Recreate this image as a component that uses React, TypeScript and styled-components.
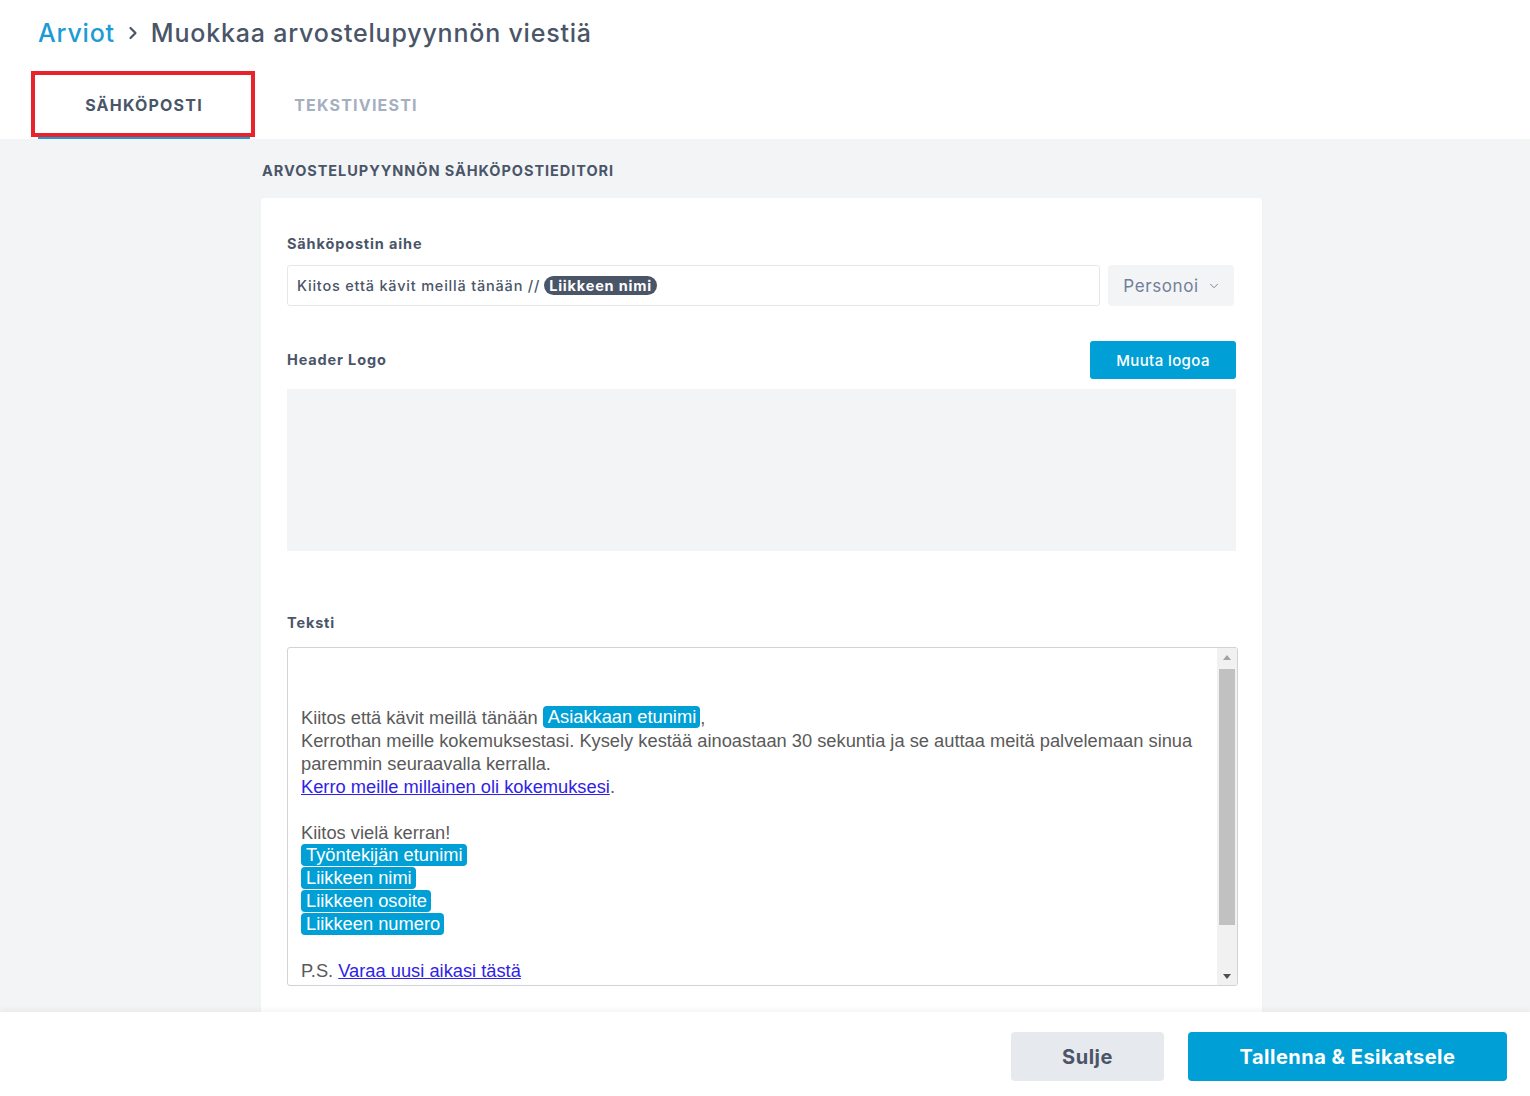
import React from "react";
import styled, { createGlobalStyle } from "styled-components";
import { ChevronRight, ChevronDown } from "lucide-react";

const GlobalStyle = createGlobalStyle`
  html, body, #root { margin: 0; padding: 0; height: 100%; }
  body { font-family: "Inter", "Noto Sans", sans-serif; background: #ffffff; }
  * { box-sizing: border-box; }
`;

const Page = styled.div`
  height: 100vh;
  display: flex;
  flex-direction: column;
  overflow: hidden;
`;

const Header = styled.header`
  background: #ffffff;
  padding: 16px 0 0 38px;
  flex: none;
`;

const Breadcrumb = styled.h1`
  margin: 0;
  display: flex;
  align-items: center;
  gap: 7px;
  font-size: 25px;
  font-weight: 500;
  line-height: 34px;
  color: #4a5568;
  letter-spacing: 0.8px;
`;

const Crumb = styled.a`
  color: #1d9bd6;
  text-decoration: none;
`;

const Chevron = styled.span`
  display: flex;
  align-items: center;
  color: #4a5568;
  margin: 0 1px;
`;

const Tabs = styled.nav`
  display: flex;
  margin-top: 25px;
`;

const Tab = styled.div<{ $active?: boolean }>`
  position: relative;
  width: 212px;
  height: 64px;
  display: flex;
  align-items: center;
  justify-content: center;
  padding-bottom: 2px;
  font-size: 16px;
  font-weight: 700;
  letter-spacing: 1.2px;
  color: ${(p) => (p.$active ? "#4a5568" : "#a5afc0")};
  border-bottom: 2px solid ${(p) => (p.$active ? "#1d9bd6" : "transparent")};
`;

const Highlight = styled.span`
  position: absolute;
  left: -7px;
  right: -5px;
  top: -4px;
  bottom: 0px;
  border: 4px solid #e8232b;
  pointer-events: none;
`;

const Main = styled.main`
  flex: 1;
  min-height: 0;
  overflow: hidden;
  background: #f3f4f6;
  padding: 23px 0 0 261px;
`;

const Column = styled.div`
  width: 1001px;
`;

const SectionTitle = styled.h2`
  margin: 0 0 18px 1px;
  font-size: 14.5px;
  line-height: 18px;
  font-weight: 700;
  color: #4a5568;
  letter-spacing: 0.95px;
`;

const Card = styled.section`
  background: #ffffff;
  border-radius: 4px;
  padding: 37px 26px 60px 26px;
  box-shadow: 0 1px 2px rgba(0, 0, 0, 0.03);
`;

const Label = styled.div`
  font-size: 14.5px;
  line-height: 18px;
  font-weight: 700;
  color: #4a5568;
  letter-spacing: 0.85px;
`;

const InputRow = styled.div`
  display: flex;
  gap: 8px;
  margin-top: 12px;
  padding-right: 2px;
`;

const SubjectInput = styled.div`
  flex: 1;
  height: 41px;
  border: 1px solid #e4e8ee;
  border-radius: 3px;
  display: flex;
  align-items: center;
  gap: 4px;
  padding: 0 9px;
  font-size: 14.5px;
  font-weight: 500;
  color: #4a5568;
  letter-spacing: 0.8px;
`;

const DarkPill = styled.span`
  background: #4a5568;
  color: #ffffff;
  border-radius: 10px;
  padding: 1px 5px;
  font-weight: 700;
  line-height: 17px;
`;

const PersonoiButton = styled.button`
  width: 126px;
  height: 41px;
  border: none;
  border-radius: 4px;
  background: #f3f4f6;
  color: #718096;
  font-family: inherit;
  font-size: 17px;
  font-weight: 400;
  letter-spacing: 0.6px;
  display: flex;
  align-items: center;
  justify-content: center;
  gap: 8px;
  padding: 0 0 0 2px;
`;

const LogoRow = styled.div`
  display: flex;
  align-items: center;
  justify-content: space-between;
  margin-top: 35px;
`;

const PrimarySmall = styled.button`
  width: 146px;
  height: 38px;
  border: none;
  border-radius: 3px;
  background: #009fd6;
  color: #ffffff;
  font-family: inherit;
  font-size: 15px;
  font-weight: 500;
  letter-spacing: 0.4px;
`;

const LogoArea = styled.div`
  height: 162px;
  margin-top: 10px;
  background: #f3f4f6;
`;

const TextLabel = styled(Label)`
  margin-top: 63px;
`;

const Editor = styled.div`
  margin: 15px -2px 0 0;
  height: 339px;
  border: 1px solid #cfd3da;
  border-radius: 3px;
  display: flex;
  overflow: hidden;
`;

const EditorBody = styled.div`
  flex: 1;
  overflow: hidden;
  padding: 12px 12px 0 13px;
  font-family: "Liberation Sans", Arial, sans-serif;
  font-size: 18.3px;
  line-height: 23px;
  color: #5a5a5a;
`;

const Line = styled.div`
  min-height: 23px;
`;

const Token = styled.span`
  display: inline-block;
  vertical-align: top;
  background: #009fd6;
  color: #ffffff;
  border-radius: 4px;
  line-height: 22px;
  padding: 0 4px 0 5px;
`;

const Link = styled.a`
  color: #3022e6;
  text-decoration: underline;
`;

const Scrollbar = styled.div`
  width: 20px;
  background: #f1f1f1;
  display: flex;
  flex-direction: column;
  align-items: center;
  padding: 0 1px;
`;

const Arrow = styled.div<{ $down?: boolean }>`
  height: 18px;
  display: flex;
  align-items: center;
  justify-content: center;
  &::after {
    content: "";
    border-left: 4px solid transparent;
    border-right: 4px solid transparent;
    ${(p) =>
      p.$down
        ? "border-top: 5px solid #505050;"
        : "border-bottom: 5px solid #a3a3a3;"}
  }
`;

const Track = styled.div`
  flex: 1;
  width: 100%;
  padding: 3px 1px 0;
`;

const Thumb = styled.div`
  width: 100%;
  height: 256px;
  background: #c1c1c1;
`;

const Footer = styled.footer`
  flex: none;
  height: 84px;
  background: #ffffff;
  box-shadow: 0 -2px 6px rgba(0, 0, 0, 0.05);
  display: flex;
  justify-content: flex-end;
  align-items: flex-start;
  gap: 24px;
  padding: 20px 23px 0 0;
  position: relative;
`;

const FooterButton = styled.button<{ $primary?: boolean }>`
  height: 49px;
  width: ${(p) => (p.$primary ? "319px" : "153px")};
  border: none;
  border-radius: 4px;
  background: ${(p) => (p.$primary ? "#009fd6" : "#e6e9ee")};
  color: ${(p) => (p.$primary ? "#ffffff" : "#4a5568")};
  font-family: inherit;
  font-size: 20px;
  font-weight: 700;
  letter-spacing: 0.5px;
`;

export default function App() {
  return (
    <Page>
      <GlobalStyle />
      <Header>
        <Breadcrumb>
          <Crumb>Arviot</Crumb>
          <Chevron>
            <ChevronRight size={20} strokeWidth={2.6} />
          </Chevron>
          <span>Muokkaa arvostelupyynnön viestiä</span>
        </Breadcrumb>
        <Tabs>
          <Tab $active>
            SÄHKÖPOSTI
            <Highlight />
          </Tab>
          <Tab>TEKSTIVIESTI</Tab>
        </Tabs>
      </Header>
      <Main>
        <Column>
          <SectionTitle>ARVOSTELUPYYNNÖN SÄHKÖPOSTIEDITORI</SectionTitle>
          <Card>
            <Label>Sähköpostin aihe</Label>
            <InputRow>
              <SubjectInput>
                Kiitos että kävit meillä tänään //
                <DarkPill>Liikkeen nimi</DarkPill>
              </SubjectInput>
              <PersonoiButton>
                Personoi
                <ChevronDown size={14} strokeWidth={1.6} />
              </PersonoiButton>
            </InputRow>
            <LogoRow>
              <Label>Header Logo</Label>
              <PrimarySmall>Muuta logoa</PrimarySmall>
            </LogoRow>
            <LogoArea />
            <TextLabel>Teksti</TextLabel>
            <Editor>
              <EditorBody>
                <Line />
                <Line />
                <Line>
                  Kiitos että kävit meillä tänään <Token>Asiakkaan etunimi</Token>,
                </Line>
                <Line>
                  Kerrothan meille kokemuksestasi. Kysely kestää ainoastaan 30 sekuntia ja se auttaa
                  meitä palvelemaan sinua paremmin seuraavalla kerralla.
                </Line>
                <Line>
                  <Link>Kerro meille millainen oli kokemuksesi</Link>.
                </Line>
                <Line />
                <Line>Kiitos vielä kerran!</Line>
                <Line>
                  <Token>Työntekijän etunimi</Token>
                </Line>
                <Line>
                  <Token>Liikkeen nimi</Token>
                </Line>
                <Line>
                  <Token>Liikkeen osoite</Token>
                </Line>
                <Line>
                  <Token>Liikkeen numero</Token>
                </Line>
                <Line />
                <Line>
                  P.S. <Link>Varaa uusi aikasi tästä</Link>
                </Line>
                <Line />
                <Line />
              </EditorBody>
              <Scrollbar>
                <Arrow />
                <Track>
                  <Thumb />
                </Track>
                <Arrow $down />
              </Scrollbar>
            </Editor>
          </Card>
        </Column>
      </Main>
      <Footer>
        <FooterButton>Sulje</FooterButton>
        <FooterButton $primary>Tallenna &amp; Esikatsele</FooterButton>
      </Footer>
    </Page>
  );
}
